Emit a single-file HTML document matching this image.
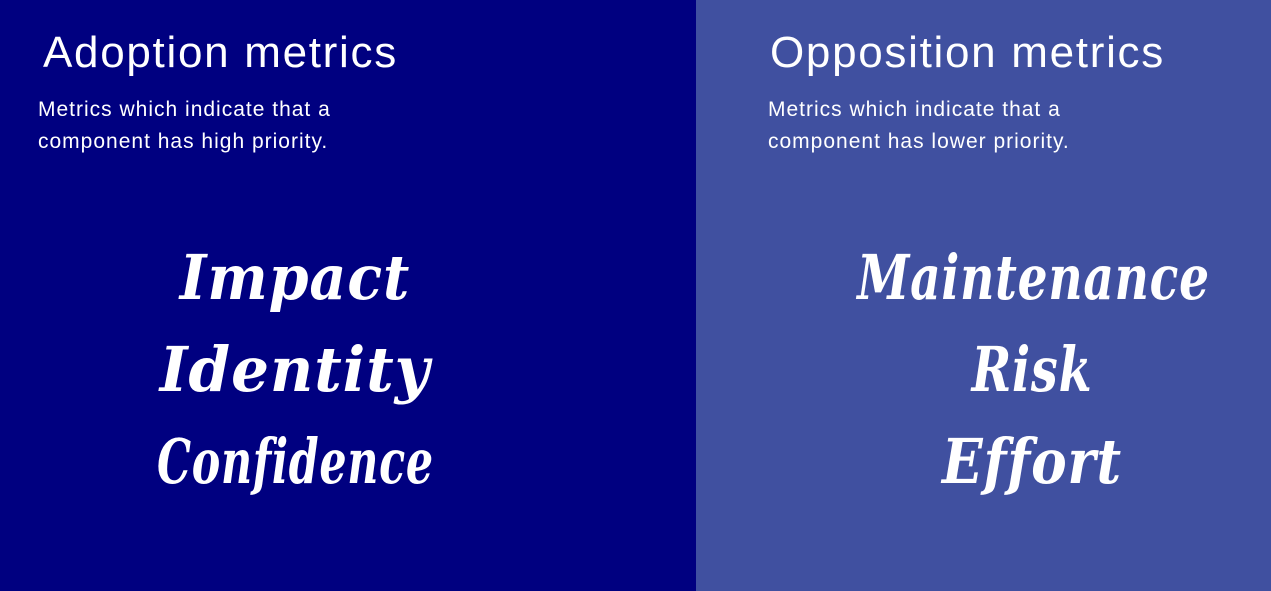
<!DOCTYPE html>
<html><head><meta charset="utf-8"><style>
html,body{margin:0;padding:0;width:1271px;height:591px;overflow:hidden;font-family:"Liberation Sans",sans-serif;color:#fff}
.l{position:absolute;left:0;top:0;width:696px;height:591px;background:#000080}
.r{position:absolute;left:696px;top:0;width:575px;height:591px;background:#4050a0}
h1{position:absolute;margin:0;font-weight:400;font-size:44px;top:28px;letter-spacing:1.7px}
p{position:absolute;margin:0;font-size:21px;line-height:32px;top:94px;letter-spacing:1px}
.w{position:absolute;text-align:center;font-family:"DejaVu Serif",serif;font-style:italic;font-weight:bold;font-size:62px;line-height:92px;top:232px;letter-spacing:1px}
.w span{display:block;white-space:nowrap}
</style></head><body>
<div class="l">
<h1 style="left:43px">Adoption metrics</h1>
<p style="left:38px">Metrics which indicate that a<br>component has high priority.</p>
<div class="w" style="left:95px;width:400px"><span style="transform:scaleX(.92)">Impact</span><span style="transform:scaleX(.96)">Identity</span><span style="transform:scaleX(.69)">Confidence</span></div>
</div>
<div class="r">
<h1 style="left:74px">Opposition metrics</h1>
<p style="left:72px">Metrics which indicate that a<br>component has lower priority.</p>
<div class="w" style="left:106px;width:460px"><span style="transform:scaleX(.76)">Maintenance</span><span style="transform:scaleX(.77)">Risk</span><span style="transform:scaleX(.86)">Effort</span></div>
</div>
</body></html>
